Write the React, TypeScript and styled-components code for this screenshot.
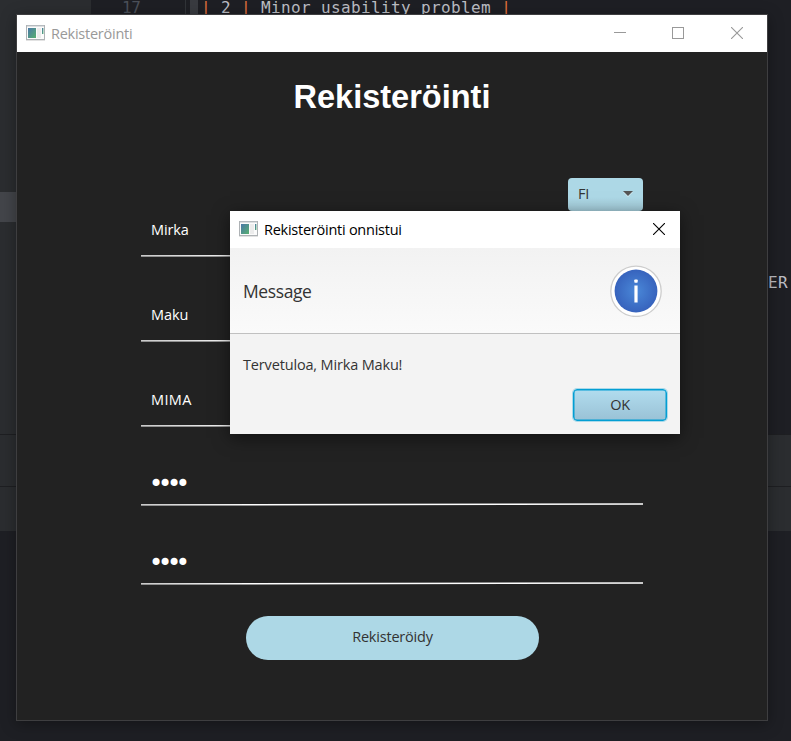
import React from "react";
import styled, { createGlobalStyle } from "styled-components";

const Global = createGlobalStyle`
  * { box-sizing: border-box; }
  html, body { margin: 0; padding: 0; overflow: hidden; background: #1e1f22; }
  body { font-family: "Open Sans", "Noto Sans", sans-serif; }
`;

const Desktop = styled.div`
  position: relative;
  width: 791px;
  height: 741px;
  overflow: hidden;
  background: #1e1f24;
`;

/* ---------- code editor behind the windows ---------- */

const Editor = styled.div`
  display: grid;
  grid-template-columns: 91px 1fr;
  grid-template-rows: 434px 97px 1fr;
  height: 100%;
  font-family: "DejaVu Sans Mono", monospace;
  font-size: 16px;
  line-height: 20px;
  letter-spacing: 0.37px;
  color: #bcbec4;
`;

const Tree = styled.div`
  background: #2b2d30;
  padding-top: 192px;
`;

const TreeSelection = styled.div`
  height: 30px;
  background: #43454a;
`;

const Code = styled.div`
  display: flex;
  flex-direction: column;
  justify-content: space-between;
  padding-bottom: 141px;
`;

const CodeLine = styled.div`
  display: flex;
  height: 16px;
  line-height: 16px;
  white-space: pre;
`;

const LineNumber = styled.span`
  width: 94px;
  padding-left: 31px;
  letter-spacing: -0.4px;
  color: #4b5059;
`;

const Gutter = styled.span`
  width: 13px;
  margin-right: 3px;
  border-left: 1px solid #313438;
  border-right: 8px solid #393b40;
`;

const Pipe = styled.span`
  color: #e0703c;
`;

const CodeTail = styled.div`
  align-self: flex-end;
  padding-right: 3px;
`;

const ToolPanel = styled.div`
  grid-column: 1 / -1;
  display: grid;
  grid-template-rows: 52px 1fr;
`;

const ToolRow = styled.div`
  background: #2b2d30;
  border-top: 1px solid #1e1f22;
`;

/* ---------- windows ---------- */

const Window = styled.section<{ $x: number; $y: number; $w: number; $h: number; $front?: boolean }>`
  position: absolute;
  left: ${(p) => p.$x}px;
  top: ${(p) => p.$y}px;
  width: ${(p) => p.$w}px;
  height: ${(p) => p.$h}px;
  display: flex;
  flex-direction: column;
  background: ${(p) => (p.$front ? "#f3f3f3" : "#222222")};
  border: ${(p) => (p.$front ? "none" : "1px solid #3e3e40")};
  box-shadow: ${(p) =>
    p.$front ? "0 4px 16px rgba(0,0,0,.5)" : "0 3px 14px rgba(0,0,0,.35)"};
`;

const TitleBar = styled.header<{ $active?: boolean }>`
  display: flex;
  align-items: flex-start;
  flex: none;
  height: 37px;
  padding: 10px 0 0 9px;
  background: #fff;
  color: ${(p) => (p.$active ? "#000" : "#999")};
`;

const Label = styled.span<{ $size?: number; $track?: number }>`
  font-size: ${(p) => p.$size ?? 14.5}px;
  letter-spacing: ${(p) => p.$track ?? -0.25}px;
  line-height: 20px;
  white-space: nowrap;
`;

const TitleLabel = styled(Label)`
  flex: 1;
  margin: -1px 0 0 6px;
`;

const Controls = styled.div<{ $right: number }>`
  display: flex;
  gap: 46px;
  padding: 2px ${(p) => p.$right}px 0 0;
  svg { display: block; }
  svg:nth-child(3) { margin-left: 1px; }
`;

const RegisterBody = styled.main`
  display: flex;
  flex-direction: column;
  align-items: center;
  padding-top: 24px;
`;

const Heading = styled.h1`
  margin: 0;
  color: #fff;
  font: bold 32.5px/42px "Liberation Sans", Arial, sans-serif;
`;

const Form = styled.form`
  display: flex;
  flex-direction: column;
  width: 502px;
  margin-top: 60px;
`;

const LanguageSelect = styled.div`
  align-self: flex-end;
  display: flex;
  align-items: center;
  justify-content: space-between;
  width: 75px;
  height: 33px;
  padding: 0 10px 1px;
  border-radius: 4px;
  background: linear-gradient(#add8e6 60%, #a3cbd8);
  color: #333;
`;

const FieldBox = styled.div<{ $gap: number }>`
  display: flex;
  flex-direction: column;
  height: 46px;
  margin-top: ${(p) => p.$gap}px;
  color: #fff;
`;

const FieldValue = styled.div<{ $secret?: boolean }>`
  display: flex;
  align-items: center;
  height: 43px;
  padding: ${(p) => (p.$secret ? "5px 0 0 8px" : "0 0 5px 10px")};
  ${(p) => p.$secret && 'font-family: "DejaVu Sans", sans-serif;'}
`;

const SubmitButton = styled.button`
  align-self: center;
  width: 293px;
  height: 44px;
  margin: 31px 0 0 1px;
  padding: 0 0 3px;
  border: 0;
  border-radius: 22px;
  background: #add8e6;
  color: #333;
  font-family: inherit;
`;

const DialogHeader = styled.div`
  display: flex;
  align-items: center;
  justify-content: space-between;
  height: 86px;
  padding: 0 18px 0 13px;
  background: linear-gradient(#f2f2f2, #fafafa);
  border-bottom: 1px solid #c0c0c0;
  color: #333;
  svg { display: block; }
`;

const DialogContent = styled.div`
  display: flex;
  flex-direction: column;
  justify-content: space-between;
  flex: 1;
  padding: 21px 13px 13px;
  color: #333;
`;

const OkButton = styled.button`
  align-self: flex-end;
  width: 94px;
  height: 32px;
  padding: 0 0 1px;
  border: 1.5px solid #039ed3;
  border-radius: 4px;
  background: linear-gradient(#b1dcee, #9ac2d6);
  box-shadow: 0 0 0 1px rgba(3, 158, 211, 0.3), inset 0 0 0 0.5px #039ed3;
  color: #333;
  font-family: inherit;
`;

const AppIcon = ({ id }: { id: string }) => (
  <svg width="19" height="16" viewBox="0 0 19 16">
    <defs>
      <linearGradient id={id} x1="0" y1="0" x2="1" y2="1">
        <stop offset="0" stopColor="#4a78a8" />
        <stop offset="1" stopColor="#58b070" />
      </linearGradient>
    </defs>
    <rect x="0.5" y="0.5" width="18" height="14" fill="#fbfbfb" stroke="#aeb2b5" />
    <path d="M1 1h17" stroke="#bfc4c8" />
    <rect x="2" y="3" width="8" height="10" fill={`url(#${id})`} />
    <rect x="11" y="3" width="4" height="10" fill="#ececec" />
    <rect x="16" y="3" width="1.4" height="6" fill={`url(#${id})`} />
    <path d="M0 15.5h19" stroke="#e2e2e2" />
  </svg>
);

const Minimize = () => (
  <svg width="12" height="12" viewBox="0 0 12 12">
    <path d="M0 5.5h12" stroke="#999" />
  </svg>
);

const Maximize = () => (
  <svg width="12" height="12" viewBox="0 0 12 12">
    <rect x="0.5" y="0.5" width="11" height="11" fill="none" stroke="#999" />
  </svg>
);

const Close = ({ color }: { color: string }) => (
  <svg width="12" height="12" viewBox="0 0 12 12">
    <path d="M0 0l12 12M12 0L0 12" stroke={color} strokeWidth="1.1" />
  </svg>
);

const Underline = () => (
  <svg width="502" height="3" viewBox="0 0 502 3">
    <path d="M0 1.95L502 1" stroke="#fff" strokeWidth="1.3" />
  </svg>
);

const InfoIcon = () => (
  <svg width="52" height="52" viewBox="0 0 52 52">
    <defs>
      <radialGradient id="info">
        <stop offset="0" stopColor="#4a88d8" />
        <stop offset="1" stopColor="#3763bd" />
      </radialGradient>
    </defs>
    <circle cx="26" cy="26.3" r="25.2" fill="#fff" stroke="#cdcdcd" strokeWidth="1.3" />
    <circle cx="26" cy="26" r="21.4" fill="url(#info)" />
    <rect x="24.3" y="14.5" width="3.4" height="3.2" rx="0.7" fill="#fff" />
    <rect x="24.4" y="20.5" width="3.2" height="17" fill="#fff" />
  </svg>
);

const fields = [
  { value: "Mirka", gap: 0, track: -0.15 },
  { value: "Maku", gap: 39, track: -0.1 },
  { value: "MIMA", gap: 39, track: 0.35 },
  { value: "••••", gap: 33, track: -5.2, secret: true },
  { value: "••••", gap: 33, track: -5.2, secret: true },
];

export default function App() {
  return (
    <Desktop>
      <Global />
      <Editor>
        <Tree>
          <TreeSelection />
        </Tree>
        <Code>
          <CodeLine>
            <LineNumber>17</LineNumber>
            <Gutter />
            <Pipe>|</Pipe>
            {" 2 "}
            <Pipe>|</Pipe>
            {" Minor usability problem "}
            <Pipe>|</Pipe>
          </CodeLine>
          <CodeTail>ER</CodeTail>
        </Code>
        <ToolPanel>
          <ToolRow />
          <ToolRow />
        </ToolPanel>
      </Editor>

      <Window $x={16} $y={14} $w={752} $h={707}>
        <TitleBar>
          <AppIcon id="mainIcon" />
          <TitleLabel>Rekisteröinti</TitleLabel>
          <Controls $right={24}>
            <Minimize />
            <Maximize />
            <Close color="#999" />
          </Controls>
        </TitleBar>
        <RegisterBody>
          <Heading>Rekisteröinti</Heading>
          <Form>
            <LanguageSelect>
              <Label>FI</Label>
              <svg width="10" height="6" viewBox="0 0 10 6">
                <path d="M0 1h10L5 6z" fill="#d5ebf2" />
                <path d="M0 0h10L5 5z" fill="#555" />
              </svg>
            </LanguageSelect>
            {fields.map((f, i) => (
              <FieldBox key={i} $gap={f.gap}>
                <FieldValue $secret={f.secret}>
                  <Label $size={f.secret ? 24 : undefined} $track={f.track}>
                    {f.value}
                  </Label>
                </FieldValue>
                <Underline />
              </FieldBox>
            ))}
            <SubmitButton type="button">
              <Label $track={-0.2}>Rekisteröidy</Label>
            </SubmitButton>
          </Form>
        </RegisterBody>
      </Window>

      <Window $x={230} $y={211} $w={450} $h={223} $front>
        <TitleBar $active>
          <AppIcon id="dialogIcon" />
          <TitleLabel>Rekisteröinti onnistui</TitleLabel>
          <Controls $right={15}>
            <Close color="#000" />
          </Controls>
        </TitleBar>
        <DialogHeader>
          <Label $size={17.5} $track={-0.4}>Message</Label>
          <InfoIcon />
        </DialogHeader>
        <DialogContent>
          <Label $track={-0.16}>Tervetuloa, Mirka Maku!</Label>
          <OkButton type="button">
            <Label>OK</Label>
          </OkButton>
        </DialogContent>
      </Window>
    </Desktop>
  );
}
